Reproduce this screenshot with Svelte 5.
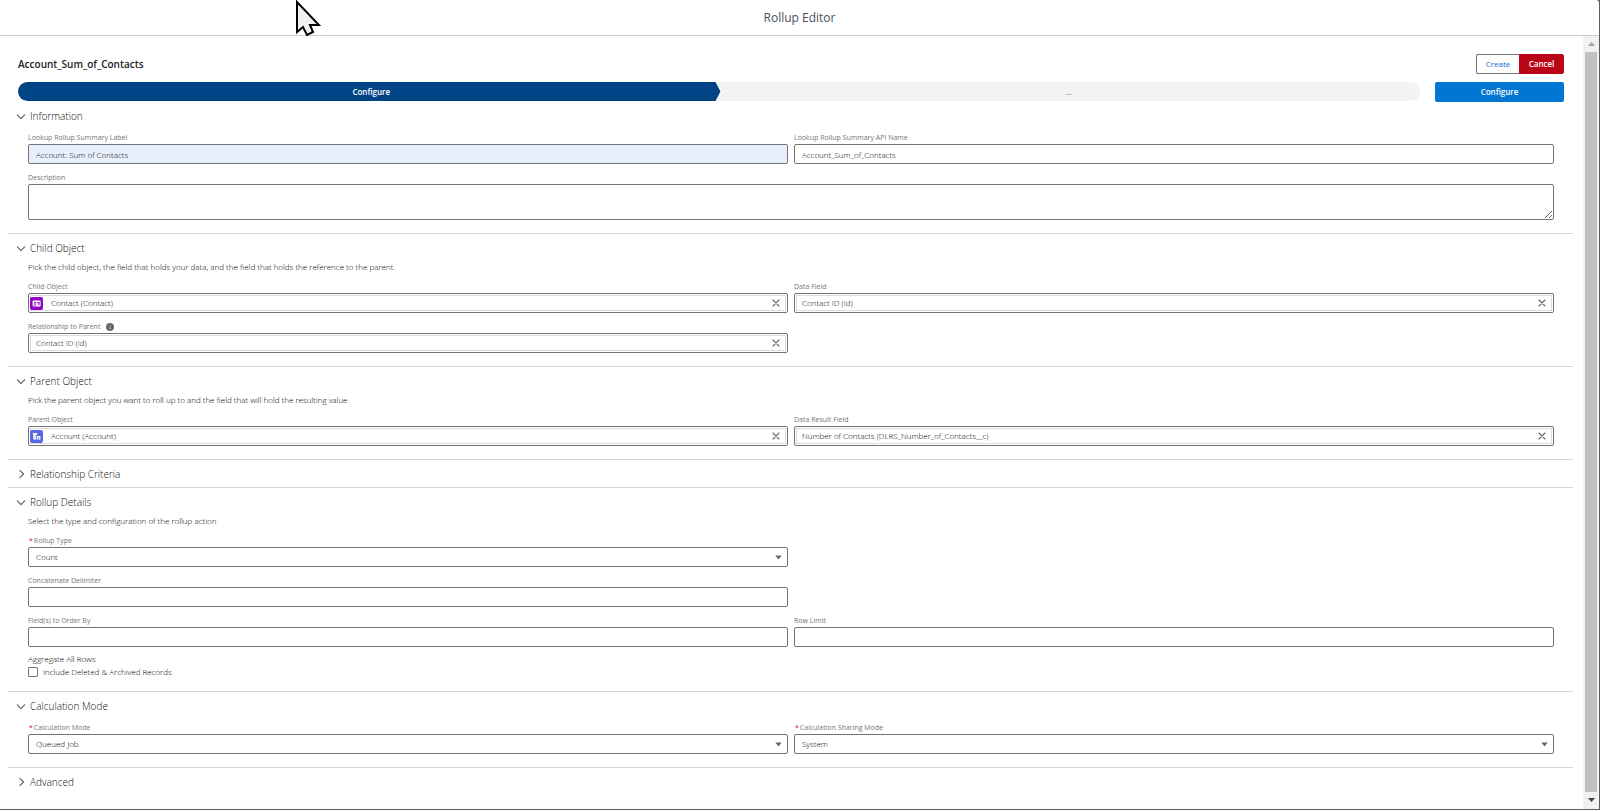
<script>
  let label = $state('Account: Sum of Contacts');
  let apiName = $state('Account_Sum_of_Contacts');
  let description = $state('');
  let childObject = $state('Contact (Contact)');
  let dataField = $state('Contact ID (Id)');
  let relationship = $state('Contact ID (Id)');
  let parentObject = $state('Account (Account)');
  let resultField = $state('Number of Contacts (DLRS_Number_of_Contacts__c)');
  let open = $state({ info: true, child: true, parent: true, criteria: false, details: true, mode: true, advanced: false });
</script>

{#snippet heading(key, text)}
  <h2>
    <button class="toggle" type="button" aria-expanded={open[key]} onclick={() => (open[key] = !open[key])}>
      <svg class:closed={!open[key]} width="10" height="10" viewBox="0 0 10 10" aria-hidden="true">
        <path d="M1.4 3.8 L5 7.6 L8.6 3.8" fill="none" stroke="#666" stroke-width="1.2" stroke-linecap="round" stroke-linejoin="round" />
      </svg>
      <span>{text}</span>
    </button>
  </h2>
{/snippet}

{#snippet clear(text, action)}
  <button class="clear" type="button" aria-label={text} onclick={action}>
    <svg width="8" height="8" viewBox="0 0 8 8" aria-hidden="true">
      <path d="M1 1 L7 7 M7 1 L1 7" stroke="#666" stroke-width="1.1" stroke-linecap="round" />
    </svg>
  </button>
{/snippet}

{#snippet caret()}
  <svg class="caret" width="7" height="5" viewBox="0 0 7 5" aria-hidden="true">
    <path d="M0.3 0.5 H6.7 L3.5 4.6 Z" fill="#666" />
  </svg>
{/snippet}

<div class="dialog">
  <header><h1>Rollup Editor</h1></header>

  <div class="body">
    <main>
      <div class="top">
        <strong>Account_Sum_of_Contacts</strong>
        <div class="actions">
          <button class="create" type="button">Create</button>
          <button class="cancel" type="button">Cancel</button>
        </div>
      </div>

      <div class="path">
        <ol>
          <li class="current"><a href="#configure">Configure</a></li>
          <li class="next"><a href="#next">...</a></li>
        </ol>
        <button class="go" type="button">Configure</button>
      </div>

      <section>
        {@render heading('info', 'Information')}
        {#if open.info}
          <div class="fields">
            <div class="field">
              <label for="label">Lookup Rollup Summary Label</label>
              <input id="label" class="box filled" type="text" bind:value={label} />
            </div>
            <div class="field">
              <label for="api">Lookup Rollup Summary API Name</label>
              <input id="api" class="box" type="text" bind:value={apiName} />
            </div>
            <div class="field wide">
              <label for="desc">Description</label>
              <textarea id="desc" class="box" bind:value={description}></textarea>
            </div>
          </div>
        {/if}
      </section>

      <section>
        {@render heading('child', 'Child Object')}
        {#if open.child}
          <p>Pick the child object, the field that holds your data, and the field that holds the reference to the parent.</p>
          <div class="fields">
            <div class="field">
              <label for="child">Child Object</label>
              <div class="lookup">
                <svg class="icon" width="13" height="13" viewBox="0 0 13 13" aria-hidden="true">
                  <rect width="13" height="13" rx="2" fill="#9602c7" />
                  <rect x="2.6" y="3.5" width="8" height="6" rx="1" fill="#fff" />
                  <circle cx="5" cy="5.8" r="1" fill="#9602c7" />
                  <path d="M3.4 8.4 Q5 6.3 6.6 8.4 Z M7.2 5 H9.6 V8 H8.4 V6 H7.2 Z" fill="#9602c7" />
                </svg>
                <input id="child" type="text" bind:value={childObject} />
                {@render clear('Clear child object', () => (childObject = ''))}
              </div>
            </div>
            <div class="field">
              <label for="data">Data Field</label>
              <div class="lookup">
                <input id="data" type="text" bind:value={dataField} />
                {@render clear('Clear data field', () => (dataField = ''))}
              </div>
            </div>
            <div class="field">
              <div class="labelrow">
                <label for="rel">Relationship to Parent</label>
                <svg width="8" height="8" viewBox="0 0 8 8" aria-hidden="true">
                  <circle cx="4" cy="4" r="4" fill="#666" />
                  <path d="M3.5 1.6 H4.6 V2.6 H3.5 Z M3.2 3.4 H4.6 V5.6 H5 V6.3 H3.1 V5.6 H3.5 V4.1 H3.2 Z" fill="#aaa" />
                </svg>
              </div>
              <div class="lookup">
                <input id="rel" type="text" bind:value={relationship} />
                {@render clear('Clear relationship', () => (relationship = ''))}
              </div>
            </div>
          </div>
        {/if}
      </section>

      <section>
        {@render heading('parent', 'Parent Object')}
        {#if open.parent}
          <p>Pick the parent object you want to roll up to and the field that will hold the resulting value</p>
          <div class="fields">
            <div class="field">
              <label for="parent">Parent Object</label>
              <div class="lookup">
                <svg class="icon" width="13" height="13" viewBox="0 0 13 13" aria-hidden="true">
                  <rect width="13" height="13" rx="2" fill="#5867e8" />
                  <path d="M2.8 3 H7.4 V4.6 H6.2 V9.6 H3.3 V4.4 H2.8 Z M7 6 H10.4 V9.6 H7 Z" fill="#fff" />
                  <path d="M4.6 5.4 H5.2 V6.2 H4.6 Z M4.6 7.2 H5.2 V8 H4.6 Z M8.3 7 H9 V9 H8.3 Z" fill="#5867e8" />
                </svg>
                <input id="parent" type="text" bind:value={parentObject} />
                {@render clear('Clear parent object', () => (parentObject = ''))}
              </div>
            </div>
            <div class="field">
              <label for="result">Data Result Field</label>
              <div class="lookup">
                <input id="result" type="text" bind:value={resultField} />
                {@render clear('Clear data result field', () => (resultField = ''))}
              </div>
            </div>
          </div>
        {/if}
      </section>

      <section class="closed">
        {@render heading('criteria', 'Relationship Criteria')}
      </section>

      <section>
        {@render heading('details', 'Rollup Details')}
        {#if open.details}
          <p>Select the type and configuration of the rollup action</p>
          <div class="fields">
            <div class="field first">
              <label for="type"><abbr title="required">*</abbr>Rollup Type</label>
              <div class="pick">
                <select id="type" class="box"><option>Count</option></select>
                {@render caret()}
              </div>
            </div>
            <div class="field first">
              <label for="delimiter">Concatenate Delimiter</label>
              <input id="delimiter" class="box" type="text" />
            </div>
            <div class="field first">
              <label for="order">Field(s) to Order By</label>
              <input id="order" class="box" type="text" />
            </div>
            <div class="field">
              <label for="limit">Row Limit</label>
              <input id="limit" class="box" type="text" />
            </div>
          </div>
          <fieldset>
            <legend>Aggregate All Rows</legend>
            <div class="check">
              <input id="all" type="checkbox" />
              <label for="all">Include Deleted &amp; Archived Records</label>
            </div>
          </fieldset>
        {/if}
      </section>

      <section>
        {@render heading('mode', 'Calculation Mode')}
        {#if open.mode}
          <div class="fields">
            <div class="field">
              <label for="mode"><abbr title="required">*</abbr>Calculation Mode</label>
              <div class="pick">
                <select id="mode" class="box"><option>Queued Job</option></select>
                {@render caret()}
              </div>
            </div>
            <div class="field">
              <label for="sharing"><abbr title="required">*</abbr>Calculation Sharing Mode</label>
              <div class="pick">
                <select id="sharing" class="box"><option>System</option></select>
                {@render caret()}
              </div>
            </div>
          </div>
        {/if}
      </section>

      <section class="closed">
        {@render heading('advanced', 'Advanced')}
      </section>
    </main>

    <div class="scrollbar" aria-hidden="true">
      <svg width="7" height="4" viewBox="0 0 7 4"><path d="M0 4 L3.5 0 L7 4 Z" fill="#a3a3a3" /></svg>
      <div class="thumb"></div>
      <svg width="7" height="4" viewBox="0 0 7 4"><path d="M0 0 H7 L3.5 4 Z" fill="#404040" /></svg>
    </div>
  </div>

  <svg class="pointer" width="26" height="38" viewBox="0 0 26 38" aria-hidden="true">
    <path d="M2 2 V32 L8 27 L12 35 L18 32 L15 25 H24 Z" fill="#f0f1f1" stroke="#000" stroke-width="2" stroke-linejoin="miter" />
  </svg>
</div>

<style>
  :global(body) {
    margin: 0;
    background: #5a5d64;
  }
  .dialog,
  .dialog * {
    box-sizing: border-box;
  }
  .dialog {
    position: relative;
    display: flex;
    flex-direction: column;
    min-height: calc(100vh - 1px);
    margin: 0 1px 1px 0;
    background: #fff;
    border-top-right-radius: 3px;
    color: #000;
    font-family: 'Open Sans', 'Noto Sans', sans-serif;
    font-size: 8px;
    font-weight: 300;
    line-height: 14px;
  }
  button,
  input,
  select,
  textarea {
    margin: 0;
    padding: 0;
    font: inherit;
    color: inherit;
  }
  header {
    height: 36px;
    padding-top: 1px;
    border-bottom: 1px solid #ccc;
    text-align: center;
  }
  h1 {
    margin: 0;
    font-size: 12px;
    font-weight: 400;
    line-height: 34px;
    color: #4a4f5a;
  }
  .body {
    flex: 1;
    display: flex;
  }
  main {
    flex: 1;
    padding: 18px 10px 0 8px;
  }
  .top {
    display: flex;
    justify-content: space-between;
    align-items: center;
    padding: 0 9px 0 10px;
  }
  .top strong {
    font-size: 10px;
    font-weight: 600;
    color: #222;
  }
  .actions {
    display: flex;
  }
  .actions button {
    height: 20px;
    border: 1px solid #747474;
    border-radius: 2px 0 0 2px;
    background: #fff;
    cursor: pointer;
  }
  .actions .create {
    width: 43px;
    color: #0070d2;
    border-right: 0;
    font-weight: 400;
  }
  .actions .cancel {
    width: 45px;
    border-color: #ba0517;
    border-radius: 0 2px 2px 0;
    background: #ba0517;
    color: #fff;
    font-weight: 600;
  }
  .path {
    display: flex;
    gap: 15px;
    padding: 8px 9px 0 10px;
  }
  ol {
    flex: 1;
    display: flex;
    height: 19px;
    margin: 0;
    padding: 0;
    list-style: none;
    border-radius: 10px;
    overflow: hidden;
  }
  li {
    flex: 1;
    text-align: center;
    line-height: 19px;
  }
  li a {
    display: block;
    color: inherit;
    text-decoration: none;
  }
  .current {
    background: #014486;
    color: #fff;
    font-weight: 600;
    clip-path: polygon(0 0, calc(100% - 5px) 0, 100% 50%, calc(100% - 5px) 100%, 0 100%);
    margin-right: -3px;
  }
  .current a {
    padding-left: 4px;
  }
  .next {
    background: #f3f3f3;
    color: #555;
    font-weight: 400;
    clip-path: polygon(0 0, 100% 0, 100% 100%, 0 100%, 5px 50%);
  }
  .go {
    width: 129px;
    height: 20px;
    border: 0;
    border-radius: 2px;
    background: #0176d3;
    color: #fff;
    font-weight: 600;
    cursor: pointer;
  }
  section {
    padding: 4px 19px 13px 20px;
    border-bottom: 1px solid #d4d4d4;
  }
  section.closed {
    padding-bottom: 3px;
  }
  section:last-child {
    border-bottom: 0;
  }
  h2 {
    margin: 0 0 0 -12px;
    height: 20px;
    font-size: 10px;
    font-weight: 300;
  }
  .toggle {
    display: flex;
    align-items: center;
    gap: 4px;
    height: 20px;
    border: 0;
    background: none;
    color: #111;
    cursor: pointer;
  }
  .toggle .closed {
    transform: rotate(-90deg);
  }
  p {
    margin: 2px 0 6px;
  }
  .fields {
    display: grid;
    grid-template-columns: 1fr 1fr;
    gap: 7px 6px;
    margin-top: 5px;
  }
  .field {
    display: flex;
    flex-direction: column;
    min-width: 0;
  }
  .wide {
    grid-column: 1 / -1;
  }
  .first {
    grid-column: 1;
  }
  .field label {
    height: 13px;
    font-size: 7px;
    font-weight: 400;
    line-height: 13px;
    color: #777;
  }
  .labelrow {
    display: flex;
    align-items: center;
    gap: 6px;
    height: 13px;
  }
  abbr {
    margin: 0 1px;
    color: #ea001e;
    text-decoration: none;
  }
  .box {
    width: 100%;
    height: 20px;
    padding: 0 7px;
    border: 1px solid #747474;
    border-radius: 2px;
    background: #fff;
  }
  .filled {
    background: #e8f0fe;
  }
  textarea.box {
    display: block;
    height: 36px;
    resize: vertical;
  }
  .lookup {
    display: flex;
    align-items: center;
    height: 20px;
    padding: 0 6px 0 1px;
    border: 1px solid #747474;
    border-radius: 2px;
    box-shadow: inset 0 0 0 1px #fff, inset 0 0 0 2px #dcdcdc;
  }
  .lookup input {
    flex: 1;
    min-width: 0;
    height: 14px;
    padding-left: 6px;
    border: 0;
    outline: 0;
    background: none;
  }
  .icon {
    flex: none;
    margin-right: 2px;
  }
  .clear {
    display: flex;
    padding: 1px;
    border: 0;
    background: none;
    cursor: pointer;
  }
  .pick {
    display: grid;
    align-items: center;
  }
  .pick > :global(*) {
    grid-area: 1 / 1;
  }
  .pick select {
    appearance: none;
  }
  .caret {
    justify-self: end;
    margin-right: 6px;
    pointer-events: none;
  }
  fieldset {
    margin: 0;
    padding: 5px 0 0;
    border: 0;
  }
  legend {
    float: left;
    width: 100%;
    padding: 0;
  }
  .check {
    clear: both;
    display: flex;
    align-items: center;
    gap: 5px;
    height: 12px;
  }
  .check input {
    appearance: none;
    width: 10px;
    height: 10px;
    border: 1px solid #747474;
    border-radius: 1px;
    background: #fff;
  }
  .check input:checked {
    background: #0176d3;
  }
  .scrollbar {
    display: flex;
    flex-direction: column;
    align-items: center;
    gap: 6px;
    width: 16px;
    padding: 6px 0 7px;
    background: #f1f1f1;
  }
  .thumb {
    flex: 1;
    width: 12px;
    background: #c1c1c1;
  }
  .pointer {
    position: absolute;
    top: 0;
    left: 295px;
  }
</style>
